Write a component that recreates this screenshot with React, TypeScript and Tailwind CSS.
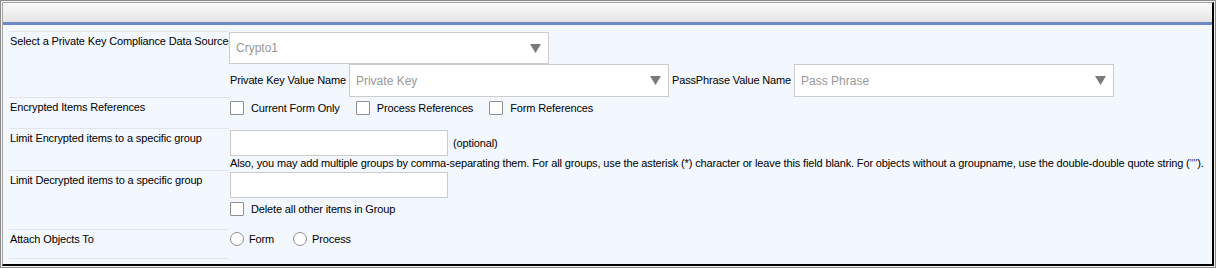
import React from 'react';

const Arrow: React.FC = () => (
  <svg width="11" height="9" viewBox="0 0 11 9" className="shrink-0">
    <path d="M0 0 H11 L5.5 9 Z" fill="#7a7a7a" />
  </svg>
);

const SelectBox: React.FC<{ value: string; className?: string }> = ({ value, className }) => (
  <div
    className={`flex items-center justify-between w-[320px] shrink-0 bg-white border border-[#cccccc] pl-[6px] pr-[7px] text-[12px] tracking-normal text-[#999999] ${className ?? ''}`}
  >
    <span>{value}</span>
    <Arrow />
  </div>
);

const CheckBox: React.FC<{ label: string; className?: string }> = ({ label, className }) => (
  <label className={`flex items-center ${className ?? ''}`}>
    <span className="w-[14px] h-[14px] bg-white border border-[#8f8f8f] rounded-[1px]" />
    <span className="ml-[7px]">{label}</span>
  </label>
);

const Radio: React.FC<{ label: string; className?: string }> = ({ label, className }) => (
  <label className={`flex items-center ${className ?? ''}`}>
    <span className="w-[14px] h-[14px] bg-white border border-[#8f8f8f] rounded-full" />
    <span className="ml-[5px]">{label}</span>
  </label>
);

const Row: React.FC<{ label: string; height: string; children: React.ReactNode }> = ({ label, height, children }) => (
  <div className={`flex ${height}`}>
    <div className="w-[220px] shrink-0 border-t border-[#e1e5eb] pl-px pt-px leading-[16px] whitespace-nowrap">{label}</div>
    <div className="flex-1 min-w-0">{children}</div>
  </div>
);

const App: React.FC = () => {
  return (
    <div
      className="w-[1216px] h-[268px] border border-[#8c8c8c] bg-[#f2f2f2] p-px text-[11px] tracking-[-0.14px] text-black"
      style={{ fontFamily: '"Liberation Sans", Arial, sans-serif' }}
    >
      <div className="h-full flex flex-col border-l border-t border-[#a6a6a6] border-r-2 border-b-2 border-r-black border-b-black">
        <div className="h-[19px] shrink-0 bg-gradient-to-b from-[#fbfbfb] to-[#e4e4e4]" />
        <div className="h-[3px] shrink-0 bg-[#6d88c5]" />
        <div className="flex-1 bg-[#f3f7fe] pl-[6px] pt-[6px]">
          <Row label="Select a Private Key Compliance Data Source" height="h-[66px]">
            <SelectBox value="Crypto1" className="h-[32px] mt-px" />
            <div className="flex items-center h-[33px]">
              <span className="ml-px">Private Key Value Name</span>
              <SelectBox value="Private Key" className="h-[33px] ml-[3px]" />
              <span className="ml-[3px]">PassPhrase Value Name</span>
              <SelectBox value="Pass Phrase" className="h-[33px] ml-[3px]" />
            </div>
          </Row>
          <Row label="Encrypted Items References" height="h-[31px]">
            <div className="flex items-center pt-[3px] ml-px">
              <CheckBox label="Current Form Only" />
              <CheckBox label="Process References" className="ml-[16px]" />
              <CheckBox label="Form References" className="ml-[16px]" />
            </div>
          </Row>
          <Row label="Limit Encrypted items to a specific group" height="h-[42px]">
            <div className="flex items-center mt-[2px] ml-px">
              <div className="w-[218px] h-[26px] bg-white border border-[#cccccc]" />
              <span className="ml-[5px]">(optional)</span>
            </div>
            <div className="ml-px leading-[14px] whitespace-nowrap">
              Also, you may add multiple groups by comma-separating them. For all groups, use the asterisk (*) character or leave this field blank. For objects without a groupname, use the double-double quote string (<span className="text-[#2a55c4]">""</span>).
            </div>
          </Row>
          <Row label="Limit Decrypted items to a specific group" height="h-[59px]">
            <div className="w-[218px] h-[26px] bg-white border border-[#cccccc] mt-[2px] ml-px" />
            <CheckBox label="Delete all other items in Group" className="mt-[3px] ml-px" />
          </Row>
          <Row label="Attach Objects To" height="h-[29px]">
            <div className="flex items-center pt-[2px] ml-px">
              <Radio label="Form" />
              <Radio label="Process" className="ml-[19px]" />
            </div>
          </Row>
          <div className="w-[220px] border-t border-[#e1e5eb]" />
        </div>
      </div>
    </div>
  );
};

export default App;
